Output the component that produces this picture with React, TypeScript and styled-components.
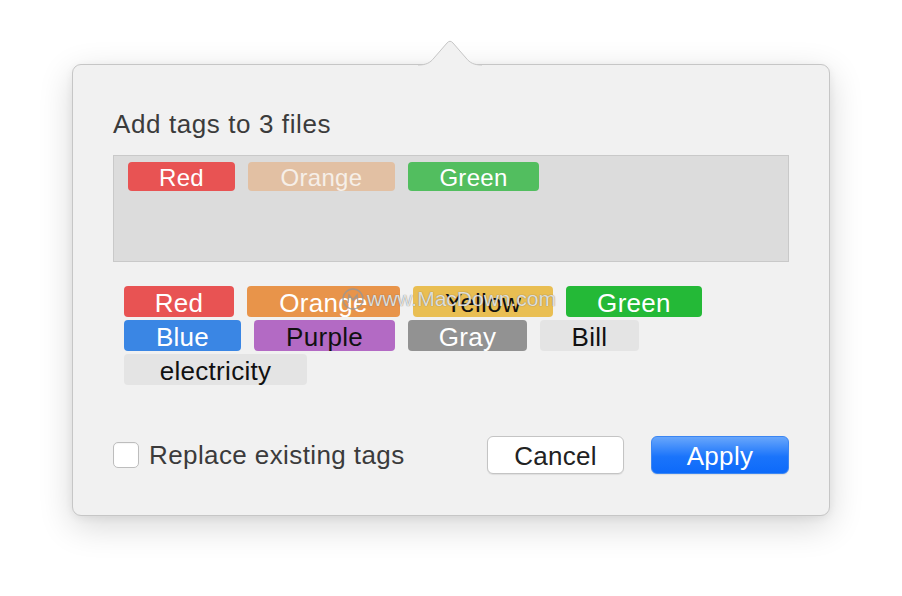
import styled, { createGlobalStyle } from "styled-components";

const GlobalStyle = createGlobalStyle`
  html, body {
    margin: 0;
    background: #ffffff;
  }
  body {
    font-family: "Liberation Sans", Arial, sans-serif;
    -webkit-font-smoothing: antialiased;
  }
`;

const Stage = styled.div`
  width: 902px;
  height: 596px;
  padding: 64px 0 0 72px;
  box-sizing: border-box;
  overflow: hidden;
`;

const Popover = styled.div`
  position: relative;
  width: 758px;
  height: 452px;
  box-sizing: border-box;
  background: #f1f1f1;
  border: 1px solid #c6c6c6;
  border-radius: 9px;
  box-shadow: 0 10px 34px rgba(0, 0, 0, 0.16), 0 2px 8px rgba(0, 0, 0, 0.06);
  padding: 43px 40px 41px 40px;
  display: flex;
  flex-direction: column;
`;

const Arrow = styled.svg`
  position: absolute;
  top: -25px;
  left: 345px;
  overflow: visible;
`;

const Title = styled.div`
  font-size: 26px;
  line-height: 32px;
  color: #3b3b3b;
  letter-spacing: 0.6px;
`;

const TokenField = styled.div`
  margin-top: 15px;
  height: 107px;
  box-sizing: border-box;
  background: #dcdcdc;
  border: 1px solid #c9c9c9;
  padding: 6px 14px;
  display: flex;
  align-items: flex-start;
  gap: 13px;
`;

const TagList = styled.div`
  margin-top: 24px;
  margin-left: 11px;
  width: 600px;
  display: flex;
  flex-wrap: wrap;
  column-gap: 13px;
  row-gap: 3px;
`;

const Tag = styled.span<{ $bg: string; $fg: string; $w: number; $small?: boolean }>`
  display: inline-flex;
  align-items: center;
  justify-content: center;
  width: ${(p) => p.$w}px;
  height: ${(p) => (p.$small ? 29 : 31)}px;
  box-sizing: border-box;
  padding-top: ${(p) => (p.$small ? 2 : 3)}px;
  border-radius: 4px;
  background: ${(p) => p.$bg};
  color: ${(p) => p.$fg};
  font-size: ${(p) => (p.$small ? 24 : 26)}px;
  letter-spacing: 0.3px;
  white-space: nowrap;
`;

const Footer = styled.div`
  margin-top: auto;
  display: flex;
  align-items: center;
  justify-content: space-between;
`;

const CheckLabel = styled.label`
  display: flex;
  align-items: center;
  gap: 10px;
  font-size: 26px;
  color: #3b3b3b;
  letter-spacing: 0.4px;
`;

const CheckBox = styled.span`
  width: 26px;
  height: 26px;
  box-sizing: border-box;
  background: #ffffff;
  border: 1px solid #bdbdbd;
  border-radius: 5px;
  box-shadow: inset 0 1px 1px rgba(0, 0, 0, 0.04);
`;

const Buttons = styled.div`
  display: flex;
  gap: 27px;
`;

const Button = styled.button<{ $primary?: boolean; $w: number }>`
  width: ${(p) => p.$w}px;
  height: 38px;
  box-sizing: border-box;
  border-radius: 6px;
  font-family: inherit;
  font-size: 26px;
  letter-spacing: 0.3px;
  padding: 2px 0 0;
  color: ${(p) => (p.$primary ? "#ffffff" : "#222222")};
  background: ${(p) =>
    p.$primary ? "linear-gradient(#68a6fb, #1a74fb 55%, #0d6afa)" : "#ffffff"};
  border: 1px solid ${(p) => (p.$primary ? "#3b86f3" : "#c4c4c4")};
  box-shadow: 0 1px 1px rgba(0, 0, 0, 0.08);
`;

const Watermark = styled.div`
  position: absolute;
  left: 268px;
  top: 222px;
  display: flex;
  align-items: center;
  gap: 2px;
  font-size: 21px;
  color: rgba(255, 255, 255, 0.8);
  text-shadow: 0 0 1px rgba(80, 80, 80, 0.9);
  pointer-events: none;
`;

const selected = [
  { name: "Red", bg: "#e85353", fg: "#ffffff", w: 107 },
  { name: "Orange", bg: "#e2c0a3", fg: "#f6efe8", w: 147 },
  { name: "Green", bg: "#52be5f", fg: "#ffffff", w: 131 },
];

const tags = [
  { name: "Red", bg: "#e85353", fg: "#ffffff", w: 110 },
  { name: "Orange", bg: "#e8944a", fg: "#ffffff", w: 153 },
  { name: "Yellow", bg: "#e9be52", fg: "#111111", w: 140 },
  { name: "Green", bg: "#24b937", fg: "#ffffff", w: 136 },
  { name: "Blue", bg: "#3a86e4", fg: "#ffffff", w: 117 },
  { name: "Purple", bg: "#b36ac4", fg: "#111111", w: 141 },
  { name: "Gray", bg: "#929292", fg: "#ffffff", w: 119 },
  { name: "Bill", bg: "#e4e4e4", fg: "#111111", w: 99 },
  { name: "electricity", bg: "#e4e4e4", fg: "#111111", w: 183 },
];

export default function App() {
  return (
    <>
      <GlobalStyle />
      <Stage>
        <Popover>
          <Arrow width="64" height="26" viewBox="0 0 64 26">
            <path
              d="M0 25 C8 25 12 23 16 18 L29 3 Q32 -0.5 35 3 L48 18 C52 23 56 25 64 25 L64 26 L0 26 Z"
              fill="#f1f1f1"
            />
            <path
              d="M0 25 C8 25 12 23 16 18 L29 3 Q32 -0.5 35 3 L48 18 C52 23 56 25 64 25"
              fill="none"
              stroke="#c6c6c6"
              strokeWidth="1"
            />
          </Arrow>
          <Title>Add tags to 3 files</Title>
          <TokenField>
            {selected.map((t) => (
              <Tag key={t.name} $bg={t.bg} $fg={t.fg} $w={t.w} $small>
                {t.name}
              </Tag>
            ))}
          </TokenField>
          <TagList>
            {tags.map((t) => (
              <Tag key={t.name} $bg={t.bg} $fg={t.fg} $w={t.w}>
                {t.name}
              </Tag>
            ))}
          </TagList>
          <Footer>
            <CheckLabel>
              <CheckBox />
              Replace existing tags
            </CheckLabel>
            <Buttons>
              <Button $w={137}>Cancel</Button>
              <Button $w={138} $primary>
                Apply
              </Button>
            </Buttons>
          </Footer>
          <Watermark>
            <svg width="24" height="24" viewBox="0 0 24 24">
              <circle cx="12" cy="12" r="10" fill="none" stroke="rgba(150,150,150,0.8)" strokeWidth="1.5" />
              <path d="M7 16 L8 8 L12 13 L16 8 L17 16" fill="none" stroke="rgba(150,150,150,0.8)" strokeWidth="1.5" />
            </svg>
            www.MacDown.com
          </Watermark>
        </Popover>
      </Stage>
    </>
  );
}
